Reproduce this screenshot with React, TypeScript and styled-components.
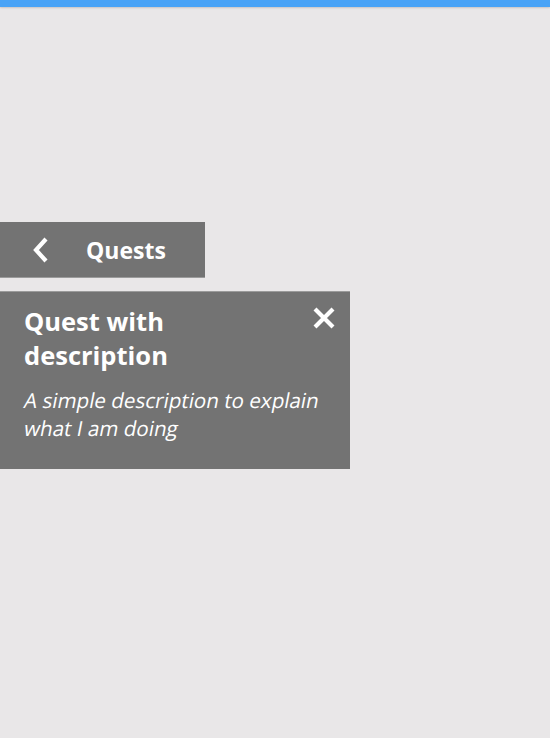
import styled, { createGlobalStyle } from 'styled-components';

const GlobalStyle = createGlobalStyle`
  html, body {
    margin: 0;
    padding: 0;
    background: #e9e7e8;
    font-family: 'Open Sans', 'Liberation Sans', sans-serif;
  }
`;

const Page = styled.div`
  min-height: 738px;
  display: flex;
  flex-direction: column;
`;

const TopBar = styled.div`
  height: 7px;
  background: #48a3f7;
  box-shadow: 0 1px 2px rgba(0, 0, 0, 0.15);
`;

const Panel = styled.div`
  margin-top: 215px;
  display: flex;
  flex-direction: column;
  align-items: flex-start;
  gap: 13px;
`;

const Header = styled.button`
  box-sizing: border-box;
  width: 205px;
  height: 56px;
  display: flex;
  align-items: center;
  gap: 36px;
  padding: 0 0 0 32px;
  border: none;
  border-bottom: 1px solid #9b9b9b;
  background: #737373;
  color: #fff;
  font-family: inherit;
  font-size: 23px;
  font-weight: 700;
  cursor: pointer;
`;

const Card = styled.div`
  box-sizing: border-box;
  width: 350px;
  padding: 12px 14px 27px 23px;
  border-top: 1px solid #9b9b9b;
  background: #737373;
  color: #fff;
  display: flex;
  flex-direction: column;
  gap: 14px;
`;

const CardHead = styled.div`
  display: flex;
  justify-content: space-between;
  align-items: flex-start;
  padding-left: 1px;
`;

const Title = styled.h2`
  margin: 0;
  font-size: 25.5px;
  font-weight: 700;
  line-height: 34px;
`;

const Description = styled.p`
  margin: 0;
  font-size: 20.6px;
  line-height: 28px;
`;

/* the reference slants the regular face rather than using the italic one */
const SlantedLine = styled.span`
  display: block;
  transform: skewX(-11deg);
  transform-origin: 0 80%;
`;

const CloseButton = styled.button`
  margin-top: 2px;
  padding: 0;
  border: none;
  background: none;
  display: flex;
  cursor: pointer;
`;

const Chevron = () => (
  <svg width="18" height="26" viewBox="0 0 18 26">
    <path d="M14 2 L4 13 L14 24" fill="none" stroke="#fff" strokeWidth="4.2" />
  </svg>
);

const Cross = () => (
  <svg width="24" height="24" viewBox="0 0 24 24">
    <path d="M3 3 L21 21 M21 3 L3 21" fill="none" stroke="#fff" strokeWidth="4.2" />
  </svg>
);

export default function App() {
  return (
    <>
      <GlobalStyle />
      <Page>
        <TopBar />
        <Panel>
          <Header>
            <Chevron />
            Quests
          </Header>
          <Card>
            <CardHead>
              <Title>
                Quest with
                <br />
                description
              </Title>
              <CloseButton aria-label="Close">
                <Cross />
              </CloseButton>
            </CardHead>
            <Description>
              <SlantedLine>A simple description to explain</SlantedLine>
              <SlantedLine>what I am doing</SlantedLine>
            </Description>
          </Card>
        </Panel>
      </Page>
    </>
  );
}
